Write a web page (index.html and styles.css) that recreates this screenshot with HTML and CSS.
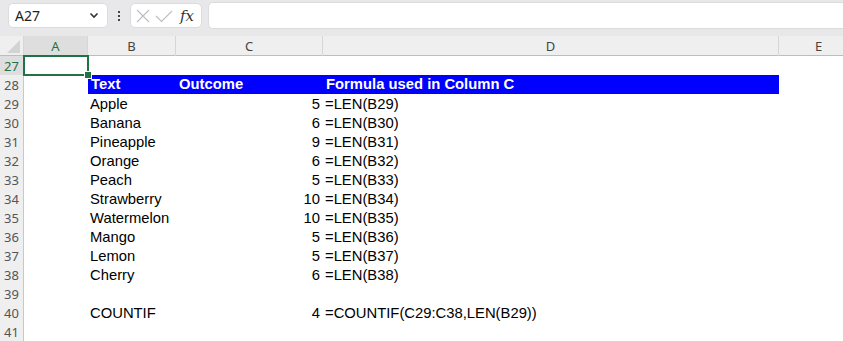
FILE: index.html
```html
<!DOCTYPE html>
<html lang="en">
<head>
    <meta charset="UTF-8">
    <title>LEN and COUNTIF</title>
    <link rel="stylesheet" href="styles.css">
</head>
<body>
    <div class="toolbar">
        <div class="name-box">
            <span>A27</span>
            <svg width="10" height="7" viewBox="0 0 10 7"><path d="M1.5 1.5 L5 5 L8.5 1.5" fill="none" stroke="#333" stroke-width="1.6"/></svg>
        </div>
        <div class="dots"><i></i><i></i><i></i></div>
        <div class="fx-box">
            <svg width="18" height="18" viewBox="0 0 18 18"><path d="M3 3 L15 15 M15 3 L3 15" stroke="#bdbdbd" stroke-width="1.1" fill="none"/></svg>
            <svg width="20" height="18" viewBox="0 0 20 18"><path d="M2 9 L7.5 14.5 L18 4" stroke="#bdbdbd" stroke-width="1.1" fill="none"/></svg>
            <span class="fx">fx</span>
        </div>
        <div class="formula-input"></div>
    </div>

    <div class="sheet">
        <div class="row head-row">
            <div class="corner"><span class="tri"></span></div>
            <div class="col-head active">A</div>
            <div class="col-head">B</div>
            <div class="col-head">C</div>
            <div class="col-head">D</div>
            <div class="col-head">E</div>
        </div>

        <div class="row">
            <div class="row-head active">27</div>
            <div class="cell selected"></div>
            <div class="cell"></div><div class="cell"></div><div class="cell"></div><div class="cell"></div>
        </div>
        <div class="row">
            <div class="row-head">28</div>
            <div class="cell"></div>
            <div class="cell title">Text</div>
            <div class="cell title">Outcome</div>
            <div class="cell title">Formula used in Column C</div>
            <div class="cell"></div>
        </div>
        <div class="row"><div class="row-head">29</div><div class="cell"></div><div class="cell">Apple</div><div class="cell num">5</div><div class="cell">=LEN(B29)</div><div class="cell"></div></div>
        <div class="row"><div class="row-head">30</div><div class="cell"></div><div class="cell">Banana</div><div class="cell num">6</div><div class="cell">=LEN(B30)</div><div class="cell"></div></div>
        <div class="row"><div class="row-head">31</div><div class="cell"></div><div class="cell">Pineapple</div><div class="cell num">9</div><div class="cell">=LEN(B31)</div><div class="cell"></div></div>
        <div class="row"><div class="row-head">32</div><div class="cell"></div><div class="cell">Orange</div><div class="cell num">6</div><div class="cell">=LEN(B32)</div><div class="cell"></div></div>
        <div class="row"><div class="row-head">33</div><div class="cell"></div><div class="cell">Peach</div><div class="cell num">5</div><div class="cell">=LEN(B33)</div><div class="cell"></div></div>
        <div class="row"><div class="row-head">34</div><div class="cell"></div><div class="cell">Strawberry</div><div class="cell num">10</div><div class="cell">=LEN(B34)</div><div class="cell"></div></div>
        <div class="row"><div class="row-head">35</div><div class="cell"></div><div class="cell">Watermelon</div><div class="cell num">10</div><div class="cell">=LEN(B35)</div><div class="cell"></div></div>
        <div class="row"><div class="row-head">36</div><div class="cell"></div><div class="cell">Mango</div><div class="cell num">5</div><div class="cell">=LEN(B36)</div><div class="cell"></div></div>
        <div class="row"><div class="row-head">37</div><div class="cell"></div><div class="cell">Lemon</div><div class="cell num">5</div><div class="cell">=LEN(B37)</div><div class="cell"></div></div>
        <div class="row"><div class="row-head">38</div><div class="cell"></div><div class="cell">Cherry</div><div class="cell num">6</div><div class="cell">=LEN(B38)</div><div class="cell"></div></div>
        <div class="row"><div class="row-head">39</div><div class="cell"></div><div class="cell"></div><div class="cell"></div><div class="cell"></div><div class="cell"></div></div>
        <div class="row"><div class="row-head">40</div><div class="cell"></div><div class="cell">COUNTIF</div><div class="cell num">4</div><div class="cell">=COUNTIF(C29:C38,LEN(B29))</div><div class="cell"></div></div>
        <div class="row"><div class="row-head">41</div><div class="cell"></div><div class="cell"></div><div class="cell"></div><div class="cell"></div><div class="cell"></div></div>
    </div>
</body>
</html>
```

FILE: styles.css
```css
body {
    margin: 0;
    background: #fff;
    font-family: "Segoe UI", "Noto Sans", "Open Sans", sans-serif;
    overflow: hidden;
}
.toolbar {
    display: flex;
    align-items: center;
    height: 36px;
    padding: 0 0 5px 8px;
    box-sizing: border-box;
    background: #e8e8eb;
}
.name-box {
    width: 100px;
    height: 25px;
    box-sizing: border-box;
    display: flex;
    align-items: center;
    justify-content: space-between;
    padding: 0 8px 0 6px;
    background: #fff;
    border: 1px solid #dcdcdc;
    border-radius: 5px;
    font-size: 14px;
    color: #222;
}
.dots {
    width: 22px;
    display: flex;
    flex-direction: column;
    align-items: center;
    gap: 2px;
}
.dots i {
    width: 2px;
    height: 2px;
    background: #444;
}
.fx-box {
    width: 72px;
    height: 25px;
    box-sizing: border-box;
    display: flex;
    align-items: center;
    gap: 2px;
    padding: 0 3px;
    background: #fff;
    border: 1px solid #dcdcdc;
    border-radius: 5px;
}
.fx {
    margin-left: 4px;
    font-family: "DejaVu Serif", "Liberation Serif", serif;
    font-style: italic;
    font-size: 15px;
    color: #333;
}
.formula-input {
    flex: 1;
    height: 25px;
    margin-left: 6px;
    background: #fff;
    border: 1px solid #dcdcdc;
    border-right: none;
    border-radius: 5px 0 0 5px;
}
.row {
    display: grid;
    grid-template-columns: 24px 64px 88px 147px 456px 80px;
    height: 19px;
}
.head-row {
    background: #efefef;
    border-bottom: 1px solid #bdbdbd;
}
.corner {
    position: relative;
    border-right: 1px solid #d6d6d6;
}
.tri {
    position: absolute;
    right: 3px;
    bottom: 3px;
    width: 0;
    height: 0;
    border-left: 13px solid transparent;
    border-bottom: 13px solid #d3d3d3;
}
.col-head {
    text-align: center;
    font-size: 13px;
    line-height: 20px;
    color: #444;
    border-right: 1px solid #d6d6d6;
}
.col-head.active {
    background: #dedede;
    color: #217346;
}
.row-head {
    background: #efefef;
    border-right: 1px solid #c8c8c8;
    border-bottom: 1px solid #dadada;
    box-sizing: border-box;
    font-size: 13px;
    line-height: 20px;
    text-align: center;
    color: #555;
}
.row-head.active {
    background: #dedede;
    color: #217346;
}
.cell {
    font-family: "Liberation Sans", Arial, sans-serif;
    font-size: 14.8px;
    line-height: 20px;
    height: 19px;
    overflow: visible;
    color: #000;
    padding-left: 2px;
    white-space: nowrap;
}
.cell.num {
    text-align: right;
    padding: 0 3px 0 0;
}
.cell.title {
    background: #0000ff;
    color: #fff;
    font-weight: bold;
    padding-left: 3px;
    line-height: 19px;
}
.cell.selected {
    position: relative;
}
.cell.selected::before {
    content: "";
    position: absolute;
    left: -1px;
    top: -1px;
    right: -1px;
    bottom: -1px;
    border: 2px solid #217346;
}
.cell.selected::after {
    content: "";
    position: absolute;
    right: -4px;
    bottom: -4px;
    width: 6px;
    height: 6px;
    background: #217346;
    border: 1px solid #fff;
}
```
